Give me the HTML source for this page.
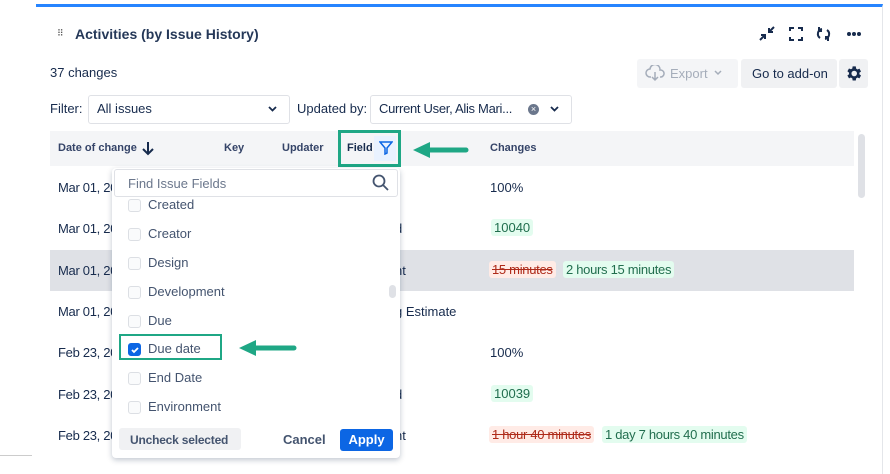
<!DOCTYPE html>
<html><head><style>
*{box-sizing:border-box;margin:0;padding:0}
body{width:890px;height:470px;background:#fff;font-family:"Liberation Sans",sans-serif;color:#172b4d;position:relative;overflow:hidden;font-size:13px}
.a{position:absolute}
.panel{left:36px;top:4px;width:847px;height:470px;border-top:3px solid #2684ff;border-right:1px solid #e4e6ea}
.t{position:absolute;white-space:nowrap}
.d{letter-spacing:-0.3px}
.tag{position:absolute;padding:1px 3px;border-radius:3px;font-size:13px}
.g{background:#e3fcef;color:#216e4e}
.r{background:#ffebe6;color:#ae2a19;text-decoration:line-through}
.cb{position:absolute;left:16px;width:13px;height:13px;border:1.5px solid #dcdfe4;border-radius:3px;background:#fafbfc}
.it{position:absolute;left:36px;font-size:13px;color:#44546f}
</style></head><body>
<div class="a panel"></div>
<div class="a" style="left:0;top:455px;width:32px;border-top:1px solid #ccc"></div>
<div class="t" style="left:57px;top:28px;font-size:9px;color:#555;letter-spacing:-1px">⠿</div>
<div class="t" style="left:75px;top:26px;font-size:14px;font-weight:bold;color:#253858">Activities (by Issue History)</div>
<svg class="a" style="left:758px;top:25px" width="110" height="18" viewBox="0 0 110 18" fill="none" stroke="#172b4d" stroke-width="2">
<path d="M2 15l5-5M3 10h4v4M16 2l-5 5M11 3v4h4"/>
<path d="M32 6V3h4M40 3h4v3M44 12v3h-4M36 15h-4v-3"/>
<path d="M64 4a5 5 0 0 0-2 9M61 2l0 4h3M67 14a5 5 0 0 0 2-9M70 16v-4h-3"/>
<circle cx="91" cy="9" r="1" fill="#172b4d"/><circle cx="96" cy="9" r="1" fill="#172b4d"/><circle cx="101" cy="9" r="1" fill="#172b4d"/>
</svg>
<div class="t" style="left:50px;top:65px;color:#172b4d">37 changes</div>
<div class="a" style="left:637px;top:59px;width:101px;height:29px;background:#f4f5f7;border-radius:3px"></div>
<svg class="a" style="left:645px;top:65px" width="22" height="17" viewBox="0 0 22 17" fill="none" stroke="#a5adba" stroke-width="1.5"><path d="M6 12H5a4 4 0 0 1 0-8 5 5 0 0 1 10 1 3.5 3.5 0 0 1 1 7h-1M10 7v8M7 12l3 3 3-3"/></svg>
<div class="t" style="left:670px;top:66px;color:#a5adba">Export</div>
<svg class="a" style="left:714px;top:70px" width="8" height="6" viewBox="0 0 8 6" fill="none" stroke="#a5adba" stroke-width="1.5"><path d="M1 1l3 3 3-3"/></svg>
<div class="a" style="left:741px;top:59px;width:96px;height:29px;background:#f0f1f3;border-radius:3px"></div>
<div class="t" style="left:752px;top:66px;color:#172b4d">Go to add-on</div>
<div class="a" style="left:839px;top:59px;width:29px;height:29px;background:#f0f1f3;border-radius:3px"></div>
<svg class="a" style="left:844px;top:64px" width="19" height="19" viewBox="0 0 24 24"><path fill="#172b4d" d="M19.4 13a7.5 7.5 0 0 0 0-2l2.1-1.6-2-3.5-2.5 1a7 7 0 0 0-1.7-1L14.9 3h-4l-.4 2.7a7 7 0 0 0-1.7 1l-2.5-1-2 3.5L6.4 11a7.5 7.5 0 0 0 0 2l-2.1 1.6 2 3.5 2.5-1a7 7 0 0 0 1.7 1l.4 2.7h4l.4-2.7a7 7 0 0 0 1.7-1l2.5 1 2-3.5zM12.9 15.5a3.5 3.5 0 1 1 0-7 3.5 3.5 0 0 1 0 7z"/></svg>
<div class="t" style="left:50px;top:101px">Filter:</div>
<div class="a" style="left:88px;top:95px;width:202px;height:29px;border:1px solid #dfe1e6;border-radius:3px"></div>
<div class="t" style="left:97px;top:101px">All issues</div>
<svg class="a" style="left:268px;top:106px" width="9" height="6" viewBox="0 0 9 6" fill="none" stroke="#172b4d" stroke-width="1.8"><path d="M1 1l3.5 3.5L8 1"/></svg>
<div class="t" style="left:297px;top:101px">Updated by:</div>
<div class="a" style="left:370px;top:95px;width:202px;height:29px;border:1px solid #dfe1e6;border-radius:3px"></div>
<div class="t d" style="left:379px;top:101px">Current User, Alis Mari...</div>
<div class="a" style="left:528px;top:104px;width:11px;height:11px;border-radius:50%;background:#6b778c;color:#fff;font-size:9px;line-height:11px;text-align:center">×</div>
<svg class="a" style="left:550px;top:106px" width="9" height="6" viewBox="0 0 9 6" fill="none" stroke="#172b4d" stroke-width="1.8"><path d="M1 1l3.5 3.5L8 1"/></svg>
<div class="a" style="left:50px;top:131px;width:804px;height:35px;background:#f4f5f7"></div>
<div class="a" style="left:858px;top:134px;width:7px;height:64px;background:#dfe1e6;border-radius:4px"></div>
<div class="t" style="left:58px;top:142px;font-size:11px;font-weight:bold;color:#354468">Date of change</div>
<svg class="a" style="left:141px;top:141px" width="14" height="15" viewBox="0 0 14 15" fill="none" stroke="#172b4d" stroke-width="2"><path d="M7 1v12M2 8l5 5 5-5"/></svg>
<div class="t" style="left:224px;top:142px;font-size:11px;font-weight:bold;color:#354468">Key</div>
<div class="t" style="left:282px;top:142px;font-size:11px;font-weight:bold;color:#354468">Updater</div>
<div class="t" style="left:347px;top:142px;font-size:11px;font-weight:bold;color:#172b4d">Field</div>
<div class="a" style="left:374px;top:136px;width:22px;height:25px;background:#e9f2ff"></div>
<svg class="a" style="left:379px;top:141px" width="14" height="14" viewBox="0 0 14 14" fill="none" stroke="#0c66e4" stroke-width="1.5"><path d="M1 1h12L8 7v5l-2 1V7z"/></svg>
<div class="a" style="left:338px;top:130px;width:63px;height:37px;border:3px solid #1fa785"></div>
<svg class="a" style="left:410px;top:140px" width="60" height="20" viewBox="0 0 60 20"><path d="M56 10H18" stroke="#1fa785" stroke-width="5" stroke-linecap="round"/><path d="M3 10L20 2v16z" fill="#1fa785"/></svg>
<div class="t" style="left:490px;top:142px;font-size:11px;font-weight:bold;color:#354468">Changes</div>
<div class="a" style="left:50px;top:250px;width:804px;height:41px;background:#dfe1e6"></div>
<div class="t d" style="left:58px;top:180px">Mar 01, 20</div><div class="t" style="left:490px;top:180px">100%</div>
<div class="t d" style="left:58px;top:221px">Mar 01, 20</div><div class="t" style="left:395px;top:221px">d</div><span class="tag g" style="left:491px;top:219px">10040</span>
<div class="t d" style="left:58px;top:263px">Mar 01, 20</div><div class="t" style="left:395px;top:263px">nt</div><span class="tag r d" style="left:489px;top:261px">15 minutes</span><span class="tag g d" style="left:563px;top:261px">2 hours 15 minutes</span>
<div class="t d" style="left:58px;top:304px">Mar 01, 20</div><div class="t" style="left:395px;top:304px">g Estimate</div>
<div class="t d" style="left:58px;top:345px">Feb 23, 20</div><div class="t" style="left:490px;top:345px">100%</div>
<div class="t d" style="left:58px;top:387px">Feb 23, 20</div><div class="t" style="left:395px;top:387px">d</div><span class="tag g" style="left:491px;top:385px">10039</span>
<div class="t d" style="left:58px;top:428px">Feb 23, 20</div><div class="t" style="left:395px;top:428px">nt</div><span class="tag r d" style="left:489px;top:426px">1 hour 40 minutes</span><span class="tag g d" style="left:602px;top:426px">1 day 7 hours 40 minutes</span>
<div class="a" style="left:112px;top:168px;width:288px;height:290px;background:#fff;border-radius:4px;box-shadow:0 2px 6px rgba(9,30,66,.25)">
 <div class="a" style="left:2px;top:1px;width:284px;height:28px;border:1px solid #dfe1e6;border-radius:3px"></div>
 <div class="t" style="left:16px;top:8px;color:#6b778c">Find Issue Fields</div>
 <svg class="a" style="left:260px;top:6px" width="17" height="17" viewBox="0 0 17 17" fill="none" stroke="#44546f" stroke-width="1.8"><circle cx="7" cy="7" r="5.5"/><path d="M11 11l5 5"/></svg>
 <div class="a" style="left:277px;top:117px;width:7px;height:13px;background:#dfe1e6;border-radius:4px"></div>
 <div class="cb" style="top:31px"></div><div class="it" style="top:29px">Created</div>
 <div class="cb" style="top:60px"></div><div class="it" style="top:58px">Creator</div>
 <div class="cb" style="top:89px"></div><div class="it" style="top:87px">Design</div>
 <div class="cb" style="top:118px"></div><div class="it" style="top:116px">Development</div>
 <div class="cb" style="top:147px"></div><div class="it" style="top:145px">Due</div>
 <div class="cb" style="top:175px;background:#0c66e4;border-color:#0c66e4"></div>
 <svg class="a" style="left:18px;top:177px" width="10" height="10" viewBox="0 0 10 10" fill="none" stroke="#fff" stroke-width="1.8"><path d="M2 5l2 2 4-4"/></svg>
 <div class="it" style="top:173px">Due date</div>
 <div class="a" style="left:7px;top:166px;width:103px;height:26px;border:2.5px solid #1fa785"></div>
 <div class="cb" style="top:204px"></div><div class="it" style="top:202px">End Date</div>
 <div class="cb" style="top:233px"></div><div class="it" style="top:231px">Environment</div>
 <div class="a" style="left:7px;top:260px;width:122px;height:22px;background:#f0f1f3;border-radius:3px"></div>
 <div class="t" style="left:18px;top:265px;font-weight:bold;color:#44546f;font-size:12px;letter-spacing:-0.2px">Uncheck selected</div>
 <div class="t" style="left:171px;top:264px;font-weight:bold;color:#44546f">Cancel</div>
 <div class="a" style="left:228px;top:261px;width:53px;height:22px;background:#0c66e4;border-radius:3px;color:#fff;font-weight:bold;text-align:center;line-height:22px">Apply</div>
</div>
<svg class="a" style="left:236px;top:338px" width="64" height="20" viewBox="0 0 64 20"><path d="M58 10H18" stroke="#1fa785" stroke-width="5" stroke-linecap="round"/><path d="M3 10L20 2v16z" fill="#1fa785"/></svg>
</body></html>
